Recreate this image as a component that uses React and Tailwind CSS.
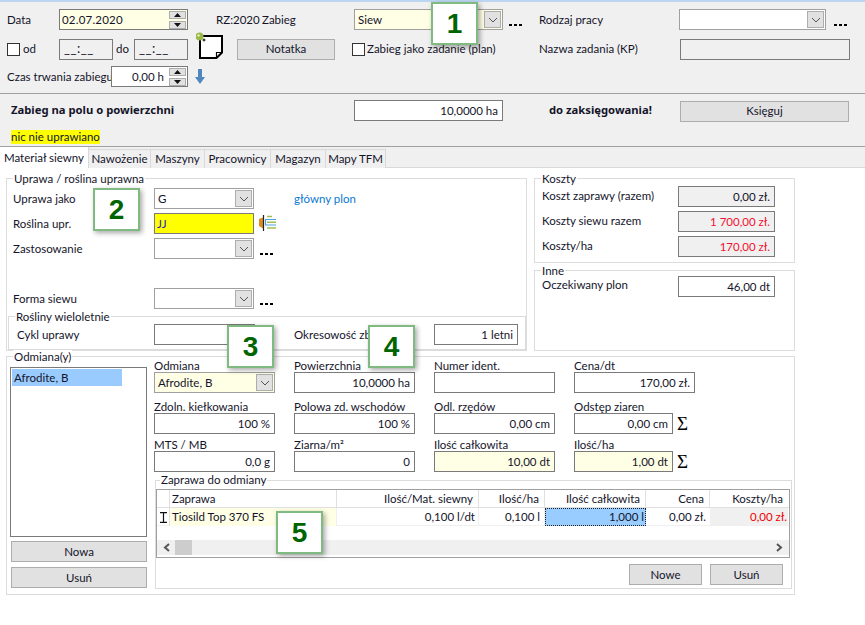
import React from "react";

const Chevron = () => (
  <svg width="10" height="6" viewBox="0 0 10 6" fill="none" stroke="#555" strokeWidth="1"><path d="M1 1l4 4 4-4" /></svg>
);

const Combo = ({ className = "", children, arrow = "" }) => (
  <div className={`shrink-0 h-[21px] border border-[#a0a0a0] flex items-center justify-between pl-[3px] pr-[1px] ${className}`}>
    <span>{children}</span>
    <span className={`w-[17px] h-[17px] bg-[#e1e1e1] border border-[#adadad] flex items-center justify-center ${arrow}`}><Chevron /></span>
  </div>
);

const Input = ({ className = "", children }) => (
  <div className={`shrink-0 h-[21px] border border-[#7a7a7a] flex items-center justify-end px-[4px] whitespace-nowrap ${className}`}>{children}</div>
);

const TimeInput = () => (
  <div className="shrink-0 w-[54px] h-[21px] border border-[#7a7a7a] bg-[#f0f0f0] flex items-center pl-[4px] text-[13px] tracking-[0.5px] whitespace-nowrap">__:__</div>
);

const Btn = ({ className = "", children }) => (
  <div className={`shrink-0 h-[21px] bg-[#e1e1e1] border border-[#adadad] flex items-center justify-center ${className}`}>{children}</div>
);

const Spin = () => (
  <div className="w-[17px] h-[18px] flex flex-col justify-between shrink-0">
    <span className="h-[8px] bg-[#e1e1e1] border border-[#adadad] flex items-center justify-center">
      <svg width="7" height="4" viewBox="0 0 7 4"><path d="M3.5 0L7 4H0z" fill="#111" /></svg>
    </span>
    <span className="h-[8px] bg-[#e1e1e1] border border-[#adadad] flex items-center justify-center">
      <svg width="7" height="4" viewBox="0 0 7 4"><path d="M3.5 4L7 0H0z" fill="#111" /></svg>
    </span>
  </div>
);

const Dots = ({ className = "" }) => (
  <span className={`shrink-0 flex gap-[2px] items-end h-[12px] ${className}`}>
    <i className="w-[3px] h-[2px] bg-black" /><i className="w-[3px] h-[2px] bg-black" /><i className="w-[3px] h-[2px] bg-black" />
  </span>
);

const Group = ({ title, className = "", titleClass = "left-[6px] -top-[7px]", children }) => (
  <div className={`relative border border-[#dcdcdc] shrink-0 ${className}`}>
    <span className={`absolute bg-white px-[1px] leading-[14px] whitespace-nowrap ${titleClass}`}>{title}</span>
    {children}
  </div>
);

const Field = ({ label, children }) => (
  <div className="shrink-0 w-[140px]">
    <div className="h-[13px] leading-[13px] whitespace-nowrap">{label}</div>
    {children}
  </div>
);

const Callout = ({ n, className = "" }) => (
  <div className={`absolute w-[47px] h-[43px] bg-white border-2 border-[#7fbb80] shadow-[2px_2px_5px_rgba(0,0,0,0.35)] flex items-center justify-center text-[28px] font-bold text-[#006400] font-['Liberation_Sans',sans-serif] ${className}`}>{n}</div>
);

const Sigma = () => (
  <span className="shrink-0 ml-[4px] text-[19px] leading-[20px] text-black font-['Liberation_Serif',serif]">Σ</span>
);

const Tab = ({ className = "", children }) => (
  <div className={`h-[19px] mt-[2px] border-r border-t border-[#d9d9d9] flex items-center justify-center bg-[#f0f0f0] ${className}`}>{children}</div>
);

const Bold = ({ className = "", children }) => (
  <span className={`shrink-0 font-bold text-[11.25px] font-['Noto_Sans',sans-serif] ${className}`}>{children}</span>
);

export default function App() {
  return (
    <div className="relative w-[865px] h-[625px] overflow-hidden bg-white text-[11.5px] text-[#14142a] font-['Lato',sans-serif]">
      {/* Top form */}
      <div className="h-[94px] bg-[#f0f0f0] border-t-2 border-[#bcd6f2] border-b border-b-[#a0a0a0] pt-[7px] pl-[7px]">
        <div className="flex items-center h-[21px]">
          <span className="w-[52px] shrink-0">Data</span>
          <div className="shrink-0 w-[129px] h-[21px] border border-[#7a7a7a] bg-[#ffffe6] flex items-center justify-between pl-[2px] pr-[1px]">
            <span className="tracking-[0.2px]">02.07.2020</span><Spin />
          </div>
          <span className="ml-[28px] w-[46px] shrink-0">RZ:2020</span>
          <span className="w-[92px] shrink-0">Zabieg</span>
          <Combo className="w-[149px] bg-[#ffffe6]">Siew</Combo>
          <Dots className="ml-[6px] w-[13px]" />
          <span className="ml-[17px] w-[140px] shrink-0">Rodzaj pracy</span>
          <Combo className="w-[147px] bg-white" />
          <Dots className="ml-[8px] w-[13px]" />
        </div>
        <div className="flex items-center h-[22px] mt-[8px]">
          <span className="w-[13px] h-[13px] bg-white border border-[#333] shrink-0" />
          <span className="ml-[3px] w-[36px] shrink-0">od</span>
          <TimeInput />
          <span className="ml-[3px] w-[18px] shrink-0">do</span>
          <TimeInput />
          <svg className="ml-[8px] shrink-0 -mt-[6px]" width="28" height="28" viewBox="0 0 28 28">
            <path d="M4 4H26V20.5L20.5 26H4Z" fill="#fff" stroke="#000" strokeWidth="2" />
            <path d="M20.5 26V20.5H26" fill="none" stroke="#000" strokeWidth="1.2" />
            <path d="M8 6.5v3M6.5 8h3" stroke="#000" strokeWidth="1" />
            <circle cx="3.5" cy="4.5" r="4" fill="#9ab84a" />
            <circle cx="2.5" cy="3.5" r="1.2" fill="#e6f0c8" />
          </svg>
          <Btn className="ml-[13px] w-[98px] bg-[#dcdcdc]">Notatka</Btn>
          <span className="ml-[17px] w-[13px] h-[13px] bg-white border border-[#333] shrink-0" />
          <span className="ml-[2px] w-[172px] shrink-0 whitespace-nowrap">Zabieg jako zadanie (plan)</span>
          <span className="w-[141px] shrink-0">Nazwa zadania (KP)</span>
          <Input className="w-[170px] bg-[#f0f0f0]" />
        </div>
        <div className="flex items-center h-[21px] mt-[6px]">
          <span className="w-[104px] shrink-0 whitespace-nowrap">Czas trwania zabiegu</span>
          <div className="shrink-0 w-[77px] h-[21px] border border-[#7a7a7a] bg-white flex items-center justify-end gap-[5px] pr-[1px]">
            <span>0,00 h</span><Spin />
          </div>
          <svg className="ml-[7px] shrink-0" width="10" height="15" viewBox="0 0 10 15">
            <path d="M3 0h4v8h3l-5 7-5-7h3z" fill="#4f86bd" />
          </svg>
        </div>
      </div>

      {/* Summary */}
      <div className="h-[53px] bg-[#f0f0f0] border-b border-[#a0a0a0] pl-[11px] pt-[6px]">
        <div className="flex items-center h-[21px]">
          <Bold className="w-[343px]">Zabieg na polu o powierzchni</Bold>
          <Input className="w-[149px] bg-white">10,0000 ha</Input>
          <Bold className="ml-[46px] w-[131px]">do zaksięgowania!</Bold>
          <Btn className="w-[169px] mt-[1px]">Księguj</Btn>
        </div>
        <div className="mt-[9px] w-fit h-[14px] leading-[14px] bg-[#ffff00]">nic nie uprawiano</div>
      </div>

      {/* Tabs */}
      <div className="flex h-[21px] bg-[#f0f0f0] border-b border-[#d9d9d9]">
        <div className="w-[89px] h-[21px] bg-white border-r border-[#d9d9d9] flex items-center justify-center">Materiał siewny</div>
        <Tab className="w-[62px]">Nawożenie</Tab>
        <Tab className="w-[54px]">Maszyny</Tab>
        <Tab className="w-[66px]">Pracownicy</Tab>
        <Tab className="w-[55px]">Magazyn</Tab>
        <Tab className="w-[60px]">Mapy TFM</Tab>
      </div>

      {/* Panel */}
      <div className="pl-[6px] pt-[10px]">
        <div className="flex gap-[7px]">
          <Group title="Uprawa / roślina uprawna" className="w-[521px] h-[173px] pt-[9px]">
            <div className="flex items-center h-[21px] pl-[6px]">
              <span className="w-[141px] shrink-0">Uprawa jako</span>
              <Combo className="w-[100px]">G</Combo>
              <span className="ml-[40px] text-[#0a78d2]">główny plon</span>
            </div>
            <div className="flex items-center h-[21px] mt-[4px] pl-[6px]">
              <span className="w-[141px] shrink-0">Roślina upr.</span>
              <div className="shrink-0 w-[100px] h-[21px] border border-[#7a7a7a] bg-[#ffff00] text-[#2222cc] flex items-center pl-[2px]">JJ</div>
              <svg className="ml-[5px] shrink-0" width="17" height="17" viewBox="0 0 17 17">
                <path d="M0 4L4 2.5V13.5L0 11z" fill="#e08a1e" />
                <path d="M4.5 0v16" stroke="#222" strokeWidth="1.2" />
                <path d="M17 4.5H6.5V10H17" fill="none" stroke="#49a3dd" strokeWidth="1.2" />
                <path d="M8 1.5h5M8 7.2h9M8 13h9" stroke="#a3bd55" strokeWidth="1.6" />
              </svg>
            </div>
            <div className="flex items-center h-[21px] mt-[4px] pl-[6px]">
              <span className="w-[141px] shrink-0">Zastosowanie</span>
              <Combo className="w-[100px]" />
              <Dots className="ml-[6px] w-[13px]" />
            </div>
            <div className="flex items-center h-[21px] mt-[29px] pl-[6px]">
              <span className="w-[141px] shrink-0">Forma siewu</span>
              <Combo className="w-[100px]" />
              <Dots className="ml-[6px] w-[13px]" />
            </div>
            <Group title="Rośliny wieloletnie" className="ml-[1px] mt-[7px] w-[518px] h-[34px] pt-[7px]">
              <div className="flex items-center h-[21px] pl-[8px]">
                <span className="w-[137px] shrink-0">Cykl uprawy</span>
                <Input className="w-[101px]" />
                <span className="ml-[39px] w-[140px] shrink-0 whitespace-nowrap">Okresowość zbi</span>
                <Input className="w-[84px]">1 letni</Input>
              </div>
            </Group>
          </Group>

          <div className="w-[261px] shrink-0 flex flex-col gap-[7px]">
            <Group title="Koszty" className="h-[85px] pt-[7px] pl-[7px]">
              <div className="flex items-center h-[21px]">
                <span className="w-[136px] shrink-0 -mt-[1px]">Koszt zaprawy (razem)</span>
                <Input className="w-[97px] bg-[#f0f0f0]">0,00 zł.</Input>
              </div>
              <div className="flex items-center h-[21px] mt-[4px]">
                <span className="w-[136px] shrink-0 -mt-[1px]">Koszty siewu razem</span>
                <Input className="w-[97px] bg-[#f0f0f0] text-[#f01030]">1 700,00 zł.</Input>
              </div>
              <div className="flex items-center h-[21px] mt-[4px]">
                <span className="w-[136px] shrink-0 -mt-[1px]">Koszty/ha</span>
                <Input className="w-[97px] bg-[#f0f0f0] text-[#f01030]">170,00 zł.</Input>
              </div>
            </Group>
            <Group title="Inne" className="h-[81px] pt-[5px] pl-[7px]">
              <div className="flex items-center h-[21px]">
                <span className="w-[136px] shrink-0 -mt-[3px]">Oczekiwany plon</span>
                <Input className="w-[97px]">46,00 dt</Input>
              </div>
            </Group>
          </div>
        </div>

        <Group title="Odmiana(y)" className="mt-[5px] w-[789px] h-[239px] flex">
          <div className="ml-[3px] mt-[10px] w-[137px] shrink-0">
            <div className="w-[137px] h-[170px] border border-[#7a7a7a] p-[1px]">
              <div className="w-[110px] h-[17px] bg-[#9acbff] pl-[2px] leading-[17px]">Afrodite, B</div>
            </div>
            <Btn className="ml-[1px] w-[136px] mt-[4px]">Nowa</Btn>
            <Btn className="ml-[1px] w-[136px] mt-[5px]">Usuń</Btn>
          </div>
          <div className="ml-[7px] mt-[2px] shrink-0">
            <div className="flex">
              <Field label="Odmiana"><Combo className="w-[121px] bg-[#ffffe6]">Afrodite, B</Combo></Field>
              <Field label="Powierzchnia"><Input className="w-[121px]">10,0000 ha</Input></Field>
              <Field label="Numer ident."><Input className="w-[121px]" /></Field>
              <Field label="Cena/dt"><Input className="w-[121px]">170,00 zł.</Input></Field>
            </div>
            <div className="flex mt-[7px]">
              <Field label="Zdoln. kiełkowania"><Input className="w-[121px]">100 %</Input></Field>
              <Field label="Polowa zd. wschodów"><Input className="w-[121px]">100 %</Input></Field>
              <Field label="Odl. rzędów"><Input className="w-[121px]">0,00 cm</Input></Field>
              <Field label="Odstęp ziaren">
                <div className="flex items-center"><Input className="w-[99px]">0,00 cm</Input><Sigma /></div>
              </Field>
            </div>
            <div className="flex mt-[4px]">
              <Field label="MTS / MB"><Input className="w-[121px]">0,0 g</Input></Field>
              <Field label="Ziarna/m²"><Input className="w-[121px]">0</Input></Field>
              <Field label="Ilość całkowita"><Input className="w-[121px] bg-[#ffffe6]">10,00 dt</Input></Field>
              <Field label="Ilość/ha">
                <div className="flex items-center"><Input className="w-[99px] bg-[#ffffe6]">1,00 dt</Input><Sigma /></div>
              </Field>
            </div>
            <Group title="Zaprawa do odmiany" titleClass="left-[4px] -top-[8px]" className="ml-[1px] mt-[8px] w-[637px] h-[109px] pt-[8px]">
              <div className="w-[634px] h-[69px] border border-[#a0a0a0]">
                <div className="grid grid-cols-[13px_167px_142px_66px_101px_64px_78px] h-[18px] border-b border-[#e0e0e0] leading-[17px]">
                  <div className="border-r border-[#e0e0e0]" />
                  <div className="border-r border-[#e0e0e0] pl-[2px]">Zaprawa</div>
                  <div className="border-r border-[#e0e0e0] text-right pr-[5px]">Ilość/Mat. siewny</div>
                  <div className="border-r border-[#e0e0e0] text-right pr-[5px]">Ilość/ha</div>
                  <div className="border-r border-[#e0e0e0] text-right pr-[5px]">Ilość całkowita</div>
                  <div className="border-r border-[#e0e0e0] text-right pr-[5px]">Cena</div>
                  <div className="text-right pr-[5px]">Koszty/ha</div>
                </div>
                <div className="grid grid-cols-[13px_167px_142px_66px_101px_64px_78px] h-[18px] border-b border-[#f0f0f0] leading-[18px]">
                  <div className="flex items-center justify-center border-r border-[#e0e0e0]">
                    <svg width="7" height="11" viewBox="0 0 7 11" fill="none" stroke="#111" strokeWidth="1.2"><path d="M0 .6h7M0 10.4h7M3.5 .6v9.8" /></svg>
                  </div>
                  <div className="bg-[#ffffe6] border-r border-[#f0f0f0] pl-[2px]">Tiosild Top 370 FS</div>
                  <div className="border-r border-[#f0f0f0] text-right pr-[3px]">0,100 l/dt</div>
                  <div className="border-r border-[#f0f0f0] text-right pr-[4px]">0,100 l</div>
                  <div className="bg-[#99ccff] border border-dotted border-[#222] text-right pr-[1px] leading-[16px]">1,000 l</div>
                  <div className="text-right pr-[4px]">0,00 zł.</div>
                  <div className="bg-[#f0f0f0] text-[#f00000] text-right pr-[1px]">0,00 zł.</div>
                </div>
                <div className="mt-[14px] h-[15px] bg-[#f0f0f0] flex items-center justify-between px-[6px] relative">
                  <svg width="7" height="9" viewBox="0 0 7 9" fill="none" stroke="#555" strokeWidth="2"><path d="M6 1L2 4.5 6 8" /></svg>
                  <span className="absolute left-[18px] w-[17px] h-[15px] bg-[#cdcdcd]" />
                  <svg width="7" height="9" viewBox="0 0 7 9" fill="none" stroke="#555" strokeWidth="2"><path d="M1 1l4 3.5L1 8" /></svg>
                </div>
              </div>
              <div className="flex justify-end gap-[8px] pr-[8px] mt-[6px]">
                <Btn className="w-[73px]">Nowe</Btn>
                <Btn className="w-[73px]">Usuń</Btn>
              </div>
            </Group>
          </div>
        </Group>
      </div>

      {/* Numbered callouts */}
      <Callout n="1" className="left-[431px] top-[2px]" />
      <Callout n="2" className="left-[93px] top-[188px]" />
      <Callout n="3" className="left-[227px] top-[325px]" />
      <Callout n="4" className="left-[368px] top-[325px]" />
      <Callout n="5" className="left-[276px] top-[511px]" />
    </div>
  );
}
